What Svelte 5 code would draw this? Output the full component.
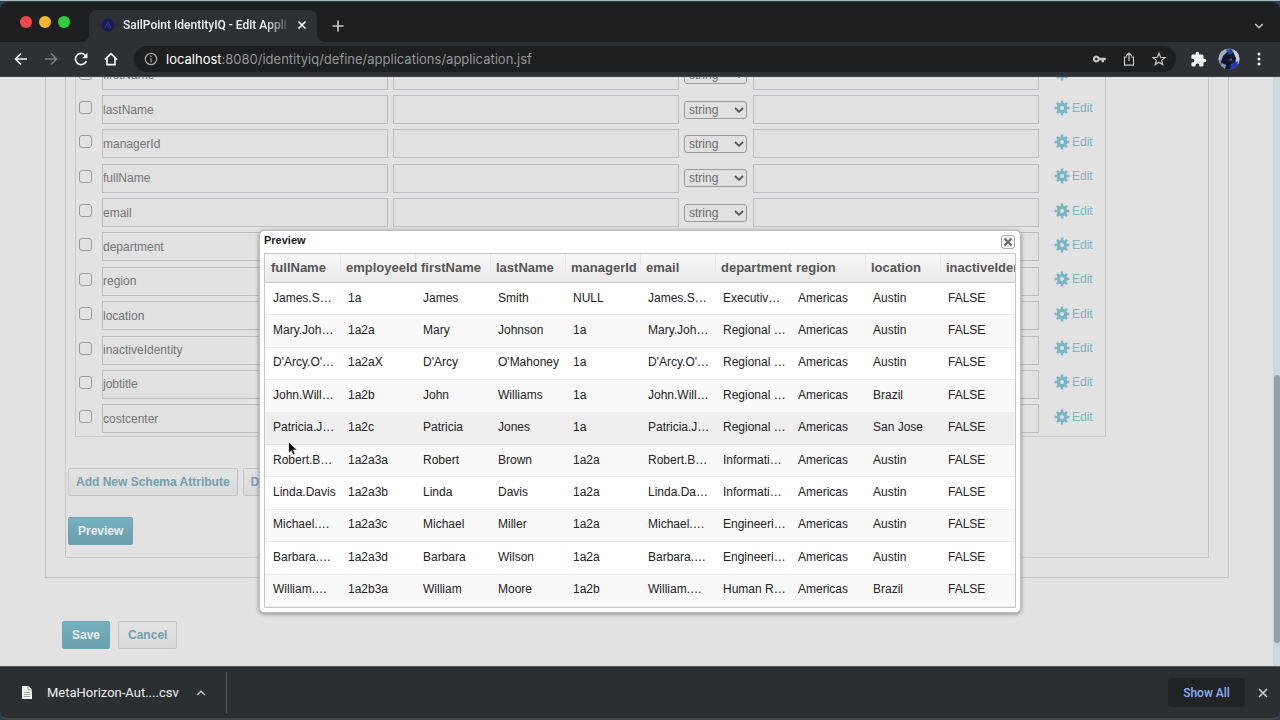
<script>
  let attributes = $state([
    'firstName', 'lastName', 'managerId', 'fullName', 'email', 'department',
    'region', 'location', 'inactiveIdentity', 'jobtitle', 'costcenter'
  ].map((name) => ({ name, checked: false, type: 'string', description: '', remediation: '' })))

  const columns = [
    'fullName', 'employeeId', 'firstName', 'lastName', 'managerId',
    'email', 'department', 'region', 'location', 'inactiveIdentity'
  ]

  const rows = [
    ['James.S…', '1a', 'James', 'Smith', 'NULL', 'James.S…', 'Executiv…', 'Americas', 'Austin', 'FALSE'],
    ['Mary.Joh…', '1a2a', 'Mary', 'Johnson', '1a', 'Mary.Joh…', 'Regional …', 'Americas', 'Austin', 'FALSE'],
    ["D'Arcy.O'…", '1a2aX', "D'Arcy", "O'Mahoney", '1a', "D'Arcy.O'…", 'Regional …', 'Americas', 'Austin', 'FALSE'],
    ['John.Will…', '1a2b', 'John', 'Williams', '1a', 'John.Will…', 'Regional …', 'Americas', 'Brazil', 'FALSE'],
    ['Patricia.J…', '1a2c', 'Patricia', 'Jones', '1a', 'Patricia.J…', 'Regional …', 'Americas', 'San Jose', 'FALSE'],
    ['Robert.B…', '1a2a3a', 'Robert', 'Brown', '1a2a', 'Robert.B…', 'Informati…', 'Americas', 'Austin', 'FALSE'],
    ['Linda.Davis', '1a2a3b', 'Linda', 'Davis', '1a2a', 'Linda.Da…', 'Informati…', 'Americas', 'Austin', 'FALSE'],
    ['Michael.…', '1a2a3c', 'Michael', 'Miller', '1a2a', 'Michael.…', 'Engineeri…', 'Americas', 'Austin', 'FALSE'],
    ['Barbara.…', '1a2a3d', 'Barbara', 'Wilson', '1a2a', 'Barbara.…', 'Engineeri…', 'Americas', 'Austin', 'FALSE'],
    ['William.…', '1a2b3a', 'William', 'Moore', '1a2b', 'William.…', 'Human R…', 'Americas', 'Brazil', 'FALSE']
  ]

  let previewOpen = $state(true)
  let shelfOpen = $state(true)
  let activeRow = $state(4)
</script>

<div class="browser">
  <header class="tabs">
    <div class="lights"><span class="red"></span><span class="yellow"></span><span class="green"></span></div>
    <div class="tab">
      <svg class="favicon" viewBox="0 0 14 14" width="14" height="14">
        <circle cx="7" cy="7" r="6.5" fill="#1b1b57" />
        <path d="M4 10 7 3.6V10M7.8 5.4 10 10H7.8" fill="none" stroke="#30357c" />
      </svg>
      <span class="title">SailPoint IdentityIQ - Edit Appli</span>
      <button class="icon" aria-label="Close tab">
        <svg viewBox="0 0 10 10" width="10" height="10"><path d="M1.5 1.5 8.5 8.5M8.5 1.5 1.5 8.5" stroke="#fff" stroke-width="1.6" /></svg>
      </button>
    </div>
    <button class="icon newtab" aria-label="New tab">
      <svg viewBox="0 0 12 12" width="12" height="12"><path d="M6 .5V11.500M.5 6H11.500" stroke="#c9cbcc" stroke-width="1.600" /></svg>
    </button>
    <button class="icon chevron" aria-label="Search tabs">
      <svg viewBox="0 0 10 10" width="10" height="10"><path d="M1.200 2 5 5.800 8.800 2" fill="none" stroke="#c9cbcc" stroke-width="1.500" /></svg>
    </button>
  </header>

  <nav class="toolbar">
    <div class="nav">
      <button class="icon" aria-label="Back">
        <svg viewBox="0 0 14 14" width="14" height="14"><path d="M13 7H2M7 1.500 1.500 7 7 12.500" fill="none" stroke="#f1f2f2" stroke-width="1.600" /></svg>
      </button>
      <button class="icon" aria-label="Forward">
        <svg viewBox="0 0 14 14" width="14" height="14"><path d="M1 7H12M7 1.500 12.500 7 7 12.500" fill="none" stroke="#7d8082" stroke-width="1.600" /></svg>
      </button>
      <button class="icon" aria-label="Reload">
        <svg viewBox="0 0 14 14" width="14" height="14">
          <path d="M12.300 9A5.600 5.600 0 1 1 11 3L12 4.200" fill="none" stroke="#f1f2f2" stroke-width="1.700" />
          <path d="M13.500.8V6.200H8.100Z" fill="#f1f2f2" />
        </svg>
      </button>
      <button class="icon" aria-label="Home">
        <svg viewBox="0 0 14 14" width="14" height="14"><path d="M.9 7.600 7 1.700 13.100 7.600M3 6V12.700H11V6" fill="none" stroke="#f1f2f2" stroke-width="1.700" /></svg>
      </button>
    </div>
    <div class="address">
      <svg viewBox="0 0 14 14" width="14" height="14">
        <circle cx="7" cy="7" r="5.700" fill="none" stroke="#a5a7a9" stroke-width="1.200" />
        <path d="M7 6.200V10.200M7 3.600V5" stroke="#a5a7a9" stroke-width="1.300" />
      </svg>
      <span class="url"><b>localhost</b>:8080/identityiq/define/applications/application.jsf</span>
      <button class="icon" aria-label="Passwords">
        <svg viewBox="0 0 14 14" width="14" height="14">
          <path d="M7.600 5.800A3.500 3.500 0 1 0 7.600 8.200H9.600V10.300H12V8.200H13.700V5.800ZM4.300 5.700A1.300 1.300 0 1 1 4.300 8.300 1.300 1.300 0 0 1 4.300 5.700Z" fill="#c6c8ca" fill-rule="evenodd" />
        </svg>
      </button>
      <button class="icon" aria-label="Share">
        <svg viewBox="0 0 14 14" width="14" height="14"><path d="M5 5H2.500V13.200H11.500V5H9M7 9V1.400M4.300 3.800 7 1.200 9.700 3.800" fill="none" stroke="#c6c8ca" stroke-width="1.200" /></svg>
      </button>
      <button class="icon" aria-label="Bookmark">
        <svg viewBox="0 0 14 14" width="14" height="14"><path d="M7 1.300 8.600 5.300 12.900 5.600 9.600 8.400 10.700 12.600 7 10.300 3.300 12.600 4.400 8.400 1.100 5.600 5.400 5.300Z" fill="none" stroke="#c6c8ca" stroke-width="1.200" /></svg>
      </button>
    </div>
    <button class="icon" aria-label="Extensions">
      <svg viewBox="0 0 24 24" width="17" height="17"><path d="M20.500 11H19V7a2 2 0 0 0-2-2h-4V3.500a2.500 2.500 0 0 0-5 0V5H4a2 2 0 0 0-2 2v3.800h1.500a2.700 2.700 0 0 1 0 5.400H2V20a2 2 0 0 0 2 2h3.800v-1.500a2.700 2.700 0 0 1 5.400 0V22H17a2 2 0 0 0 2-2v-4h1.500a2.500 2.500 0 0 0 0-5z" fill="#f1f2f2" /></svg>
    </button>
    <button class="icon avatar" aria-label="Profile">
      <svg viewBox="0 0 22 22" width="22" height="22">
        <defs><clipPath id="face"><circle cx="11" cy="11" r="10.500" /></clipPath></defs>
        <g clip-path="url(#face)">
          <rect width="22" height="22" fill="#6f8aa0" />
          <path d="M0 3 7 0 9 6 4 13 0 12Z" fill="#9bb4bd" />
          <path d="M15 1 22 5V17L18 15Z" fill="#c3ced9" />
          <path d="M5 8 9 4 15 4 18 10 17 17 12 22H5L3 14Z" fill="#10162e" />
          <path d="M9 2 13 1 15 5 11 7Z" fill="#27409b" />
          <path d="M13 16 20 13 19 20 12 22Z" fill="#2c35b8" />
          <path d="M4 15 8 17 7 21 3 19Z" fill="#8494c8" />
          <path d="M10 12 14 10 14 13Z" fill="#41597a" />
        </g>
      </svg>
    </button>
    <button class="icon" aria-label="Menu">
      <svg viewBox="0 0 4 14" width="4" height="14"><g fill="#f1f2f2"><circle cx="2" cy="2" r="1.500" /><circle cx="2" cy="7" r="1.500" /><circle cx="2" cy="12" r="1.500" /></g></svg>
    </button>
  </nav>

  <main class="page">
    <div class="scroller">
      <section class="outer">
        <section class="inner">
          <table class="schema">
            <tbody>
              {#each attributes as attr}
                <tr>
                  <td class="check"><input type="checkbox" bind:checked={attr.checked} aria-label={'Select ' + attr.name} /></td>
                  <td><input type="text" bind:value={attr.name} aria-label="Name" /></td>
                  <td><input type="text" bind:value={attr.description} aria-label="Description" /></td>
                  <td class="type">
                    <div class="select">
                      <select bind:value={attr.type} aria-label="Type">
                        <option>string</option>
                        <option>int</option>
                        <option>boolean</option>
                      </select>
                      <svg viewBox="0 0 10 8" width="10" height="8"><path d="M1 2 5 5.800 9 2" fill="none" stroke="#555" stroke-width="1.800" /></svg>
                    </div>
                  </td>
                  <td><input type="text" bind:value={attr.remediation} aria-label="Properties" /></td>
                  <td class="edit">
                    <a href="#edit">
                      <svg viewBox="0 0 16 16" width="16" height="16">
                        <g stroke="#7bb4c2" stroke-width="2.400">
                          <path d="M8 .6V15.400M.6 8H15.400M2.900 2.900 13.100 13.100M13.100 2.900 2.900 13.100" />
                        </g>
                        <circle cx="8" cy="8" r="5.200" fill="#7bb4c2" />
                        <circle cx="8" cy="8" r="2" fill="#e2e2e2" />
                      </svg>
                      Edit
                    </a>
                  </td>
                </tr>
              {/each}
            </tbody>
          </table>
          <div class="buttons">
            <button class="btn">Add New Schema Attribute</button>
            <button class="btn">Delete Schema Attribute</button>
          </div>
          <div class="buttons">
            <button class="btn primary" onclick={() => (previewOpen = true)}>Preview</button>
          </div>
        </section>
      </section>
      <div class="actions">
        <button class="btn primary">Save</button>
        <button class="btn cancel">Cancel</button>
      </div>
    </div>
    <div class="scrollbar"><div class="thumb"></div></div>

    {#if previewOpen}
      <div class="overlay">
        <div class="modal" role="dialog" aria-label="Preview">
          <div class="modal-head">
            <h2>Preview</h2>
            <button class="close" aria-label="Close" onclick={() => (previewOpen = false)}>
              <svg viewBox="0 0 10 10" width="10" height="10"><path d="M1.500 1.500 8.500 8.500M8.500 1.500 1.500 8.500" stroke="#666" stroke-width="1.800" /></svg>
            </button>
          </div>
          <div class="grid">
            <table>
              <thead>
                <tr>
                  {#each columns as column}
                    <th>{column}</th>
                  {/each}
                </tr>
              </thead>
              <tbody>
                {#each rows as row, i}
                  <tr class:active={activeRow == i} onmouseenter={() => (activeRow = i)}>
                    {#each row as cell}
                      <td>{cell}</td>
                    {/each}
                  </tr>
                {/each}
              </tbody>
            </table>
          </div>
          <svg class="pointer" viewBox="0 0 10 15" width="10" height="15">
            <path d="M.7.9V12L3.300 9.700 5.200 14 7.200 13.100 5.300 9H8.900Z" fill="#000" stroke="#fff" stroke-width=".6" />
          </svg>
        </div>
      </div>
    {/if}
  </main>

  {#if shelfOpen}
    <footer class="shelf">
      <button class="download">
        <svg viewBox="0 0 10 13" width="10" height="13">
          <path d="M0 0H6.500L10 3.500V13H0Z" fill="#f1f2f2" />
          <path d="M6 0V4H10M2 6.500H8M2 8.500H8M2 10.500H8" fill="none" stroke="#8b8e90" stroke-width=".8" />
        </svg>
        <span>MetaHorizon-Aut....csv</span>
        <svg viewBox="0 0 10 10" width="10" height="10"><path d="M1.200 7 5 3.200 8.800 7" fill="none" stroke="#c9cbcc" stroke-width="1.300" /></svg>
      </button>
      <button class="showall">Show All</button>
      <button class="icon" aria-label="Close downloads" onclick={() => (shelfOpen = false)}>
        <svg viewBox="0 0 10 10" width="10" height="10"><path d="M1 1 9 9M9 1 1 9" stroke="#d5d7d8" stroke-width="1.500" /></svg>
      </button>
    </footer>
  {/if}
</div>

<style>
  :global(body) {
    margin: 0;
    background: #2b4248;
  }
  .browser {
    display: flex;
    flex-direction: column;
    height: 100vh;
    box-sizing: border-box;
    border-top: 1px solid #a3b5bd;
    font-family: Inter, sans-serif;
    overflow: hidden;
  }
  button, input, select {
    font-family: inherit;
    box-sizing: border-box;
    margin: 0;
  }
  svg {
    display: block;
    flex: none;
  }
  .icon {
    display: flex;
    padding: 0;
    border: none;
    background: none;
  }

  .tabs {
    display: flex;
    flex: none;
    height: 40px;
    margin-top: 1px;
    padding: 0 16px 0 20px;
    box-sizing: border-box;
    border-radius: 8px 8px 0 0;
    background: #1e1f20;
  }
  .lights {
    display: flex;
    gap: 7px;
    padding-top: 14px;
    margin-right: 19px;
  }
  .lights span {
    width: 12px;
    height: 12px;
    border-radius: 50%;
  }
  .red { background: #f0484f; }
  .yellow { background: #f5b52e; }
  .green { background: #30cf3e; }
  .tab {
    position: relative;
    display: flex;
    align-items: center;
    width: 228px;
    margin-top: 8px;
    padding: 0 10px 2px 12px;
    box-sizing: border-box;
    border-radius: 8px 8px 0 0;
    background: #2d3134;
  }
  .tab::before, .tab::after {
    content: '';
    position: absolute;
    bottom: 0;
    width: 8px;
    height: 8px;
  }
  .tab::before {
    right: 100%;
    background: radial-gradient(circle at 0 0, transparent 8px, #2d3134 8px);
  }
  .tab::after {
    left: 100%;
    background: radial-gradient(circle at 100% 0, transparent 8px, #2d3134 8px);
  }
  .title {
    flex: 1;
    margin: 0 5px 0 8px;
    white-space: nowrap;
    font-family: Roboto, sans-serif;
    font-size: 12px;
    font-weight: 500;
    color: #f1f2f2;
    mask-image: linear-gradient(to right, #000 84%, transparent);
  }
  .newtab {
    margin: 18px auto 0 15px;
    align-self: flex-start;
  }
  .chevron {
    margin-top: 20px;
    align-self: flex-start;
  }

  .toolbar {
    display: flex;
    align-items: center;
    gap: 14px;
    flex: none;
    height: 35px;
    padding: 0 19px 0 14px;
    background: #2d3134;
    border-bottom: 1px solid #3d4144;
    box-sizing: border-box;
  }
  .nav {
    display: flex;
    gap: 16px;
    margin-right: 2px;
  }
  .address {
    display: flex;
    flex: 1;
    align-items: center;
    height: 26px;
    padding: 0 10px;
    border-radius: 13px;
    background: #1e1f21;
    gap: 16px;
  }
  .url {
    flex: 1;
    margin-left: -8px;
    font-size: 13px;
    white-space: nowrap;
    color: #94979a;
  }
  .url b {
    font-weight: 400;
    color: #fff;
  }
  .avatar {
    margin: 0 3px 0 -3px;
  }

  .page {
    position: relative;
    display: flex;
    flex: 1;
    min-height: 0;
    overflow: hidden;
    background: #e2e2e2;
    font-family: "Liberation Sans", Arial, sans-serif;
    font-size: 12px;
    color: #757575;
  }
  /* scrolled to the end, so the content hangs from the bottom edge */
  .scroller {
    display: flex;
    flex: 1;
    flex-direction: column;
    justify-content: flex-end;
    padding: 0 44px 17px 45px;
  }
  .outer {
    padding: 0 19px 19px;
    border: 1px solid #c6c6c7;
  }
  .inner {
    padding: 0 102px 12px 9px;
    border: 1px solid #c6c6c7;
  }
  .schema {
    width: 100%;
    height: 379px;
    margin-bottom: 31px;
    table-layout: fixed;
    border-collapse: separate;
    border-spacing: 0;
    border: 1px solid #c9c9ca;
    border-top: none;
  }
  .schema td {
    padding: 0 5px 0 0;
    vertical-align: middle;
  }
  .schema .check {
    width: 26px;
    padding: 0 0 4px 3px;
    box-sizing: border-box;
  }
  .schema .type {
    width: 69px;
    padding-right: 6px;
    box-sizing: border-box;
  }
  .schema .edit {
    width: 61px;
    padding: 0 0 4px 10px;
    box-sizing: border-box;
  }
  input[type='text'] {
    display: block;
    width: 100%;
    height: 29px;
    padding: 0;
    border: 1px solid #bcbec2;
    background: #e1e1e1;
    font-size: 12px;
    color: #757575;
  }
  input[type='checkbox'] {
    display: block;
    width: 13px;
    height: 13px;
    appearance: none;
    border: 1px solid #9b9b9b;
    border-radius: 3px;
  }
  input[type='checkbox']:checked {
    background: #7bb4c2;
  }
  .select {
    position: relative;
  }
  select {
    display: block;
    width: 100%;
    height: 18px;
    padding: 0 4px;
    appearance: none;
    border: 1px solid #999;
    border-radius: 3px;
    background: #e1e1e1;
    font-size: 12px;
    line-height: 16px;
    color: #6c6c6c;
  }
  .select svg {
    position: absolute;
    top: 5px;
    right: 3px;
    pointer-events: none;
  }
  .edit a {
    display: flex;
    align-items: center;
    gap: 2px;
    color: #7bb4c2;
    text-decoration: none;
  }
  .buttons, .actions {
    display: flex;
    gap: 5px;
  }
  .buttons {
    margin: 0 0 21px -7px;
  }
  .buttons:last-child {
    margin-bottom: 0;
  }
  .actions {
    gap: 8px;
    padding: 43px 0 0 17px;
  }
  .btn {
    height: 28px;
    padding: 0 7px;
    border: 1px solid #c3c4c5;
    border-radius: 2px;
    background: linear-gradient(#e3e3e3, #d9d9d9);
    font-size: 12px;
    font-weight: bold;
    color: #70a1ac;
  }
  .btn.cancel {
    padding: 0 9px;
  }
  .btn.primary {
    padding: 0 9px;
    border-color: #6fa3b0;
    background: linear-gradient(#76b1c0, #6a9eaa);
    color: #e9eeef;
  }
  .scrollbar {
    display: flex;
    flex-direction: column;
    width: 7px;
    padding: 298px 0 23px 1px;
    box-sizing: border-box;
    background: #d2d6d9;
  }
  .thumb {
    flex: 1;
    border-radius: 3px;
    background: #9a9ea0;
  }

  .overlay {
    position: absolute;
    inset: 0;
    display: flex;
    justify-content: center;
    align-items: flex-start;
    padding-top: 153px;
  }
  .modal {
    position: relative;
    width: 762px;
    padding: 0 4px 4px;
    box-sizing: border-box;
    border: 1px solid #bbb;
    border-radius: 5px;
    background: #fff;
    box-shadow: 0 1px 4px rgba(0, 0, 0, 0.4);
  }
  .modal-head {
    display: flex;
    justify-content: space-between;
    height: 22px;
  }
  h2 {
    margin: 0;
    font-size: 11px;
    line-height: 19px;
    color: #222;
  }
  .close {
    display: flex;
    align-items: center;
    justify-content: center;
    width: 14px;
    height: 14px;
    margin: 4px 1px 0 0;
    padding: 0;
    border: 1px solid #aaa;
    border-radius: 3px;
    background: #f2f2f2;
  }
  .grid {
    overflow: hidden;
    border: 1px solid #c8c8c8;
  }
  .grid table {
    width: 100%;
    height: 353px;
    table-layout: fixed;
    border-collapse: separate;
    border-spacing: 0;
  }
  th {
    height: 29px;
    padding: 0 0 1px 6px;
    box-sizing: border-box;
    border-bottom: 1px solid #c8c8c8;
    background: linear-gradient(#f9f9f9, #e9e9e9);
    text-align: left;
    white-space: nowrap;
    font-size: 13px;
    color: #555;
  }
  th + th {
    background: linear-gradient(#e6e6e6, #e9e9e9) 0 0 / 1px 18px no-repeat, linear-gradient(#f9f9f9, #e9e9e9);
  }
  .grid td {
    padding: 0 0 2px 8px;
    border-bottom: 1px solid #ededed;
    white-space: nowrap;
    color: #222;
  }
  .grid tbody tr:nth-child(even) {
    background: #f9f9f9;
  }
  .grid tbody tr.active {
    background: #efefef;
  }
  .active td {
    border-color: #e2e2e2;
  }
  .pointer {
    position: absolute;
    top: 210px;
    left: 28px;
  }

  .shelf {
    display: flex;
    align-items: center;
    flex: none;
    height: 54px;
    padding: 0 12px 0 0;
    border-top: 1px solid #55585a;
    border-bottom: 2px solid #45484a;
    border-radius: 0 0 8px 8px;
    box-sizing: border-box;
    background: #2c2f32;
  }
  .download {
    display: flex;
    align-items: center;
    align-self: stretch;
    width: 227px;
    margin: 5px auto 5px 0;
    padding: 0 0 0 22px;
    border: none;
    border-right: 1px solid #54575a;
    background: none;
    color: #f1f2f2;
  }
  .download span {
    margin: 0 17px 0 15px;
    font-family: Roboto, sans-serif;
    font-size: 13px;
  }
  .showall {
    width: 77px;
    height: 29px;
    margin-right: 13px;
    padding: 0;
    border: none;
    border-radius: 4px;
    background: #212426;
    font-family: Roboto, sans-serif;
    font-size: 12px;
    font-weight: 500;
    color: #8ab0f5;
  }
</style>
